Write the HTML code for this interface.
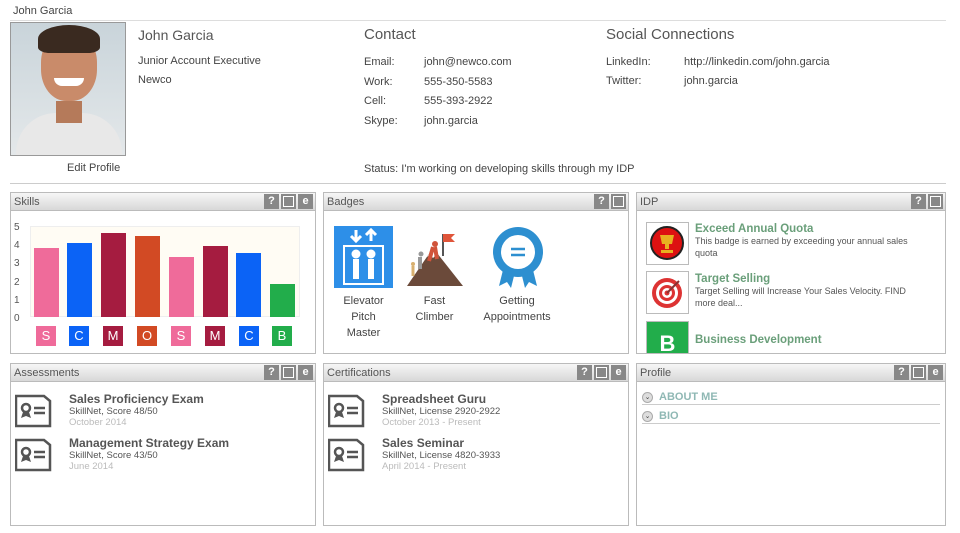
<!DOCTYPE html>
<html><head><meta charset="utf-8"><style>
*{box-sizing:border-box;margin:0;padding:0}
body{width:960px;height:533px;background:#fff;font-family:"Liberation Sans",sans-serif;color:#444;position:relative;overflow:hidden;font-size:11px}
.a{position:absolute}
.panel{position:absolute;border:1px solid #bbb;background:#fff}
.ph{height:18px;background:linear-gradient(#f6f6f6,#d8d8d8);border-bottom:1px solid #bbb;font-size:11px;line-height:18px;padding-left:3px;color:#555;position:relative}
.btns{position:absolute;right:2px;top:1px;display:flex;gap:2px}
.btns span{width:15px;height:15px;background:#888;color:#fff;font-weight:bold;font-size:11px;line-height:15px;text-align:center;display:block}
.btns span.w{position:relative}
.btns span.w:after{content:"";position:absolute;left:2px;top:2px;width:11px;height:11px;border:1px solid #fff;box-sizing:border-box;background:#888}
.bar{position:absolute;width:25px}
.lab{position:absolute;top:326px;width:20px;height:20px;color:#fff;font-size:13px;text-align:center;line-height:20px}
.it b{font-size:12px;color:#555;display:block}
.it div{font-size:9.5px;color:#555}
.it i{font-style:normal;font-size:9.5px;color:#bbb;display:block}
.idt{color:#6a9f7a;font-weight:bold;font-size:11.5px}
.idd{font-size:9px;color:#555;line-height:12px;width:225px}
.thumb{position:absolute;left:9px;width:43px;height:43px;border:1px solid #bbb;background:#fff}
</style></head><body>
<div class="a" style="left:13px;top:5px;font-size:11px;color:#444">John Garcia</div>
<div class="a" style="left:10px;top:20px;width:936px;border-top:1px solid #ddd"></div>
<div class="a" style="left:10px;top:22px;width:116px;height:134px;background:linear-gradient(#c9d4da,#e4e8ea);border:1px solid #999;overflow:hidden">
 <div class="a" style="left:30px;top:8px;width:56px;height:70px;border-radius:45%;background:#c98b6a"></div>
 <div class="a" style="left:27px;top:2px;width:62px;height:28px;border-radius:50% 50% 20% 20%;background:#3a2a20"></div>
 <div class="a" style="left:43px;top:55px;width:30px;height:8px;border-radius:0 0 10px 10px;background:#fff"></div>
 <div class="a" style="left:5px;top:90px;width:106px;height:50px;border-radius:40px 40px 0 0;background:#e8e8e8"></div>
 <div class="a" style="left:45px;top:78px;width:26px;height:22px;background:#b57a5a"></div>
</div>
<div class="a" style="left:67px;top:162px;font-size:11px">Edit Profile</div>
<div class="a" style="left:138px;top:27px;font-size:14px;color:#555">John Garcia</div>
<div class="a" style="left:138px;top:52px;font-size:11px;line-height:19px">Junior Account Executive<br>Newco</div>
<div class="a" style="left:364px;top:26px;font-size:15px;color:#555">Contact</div>
<div class="a" style="left:364px;top:53px;font-size:11px;line-height:19.7px">Email:<br>Work:<br>Cell:<br>Skype:</div>
<div class="a" style="left:424px;top:53px;font-size:11px;line-height:19.7px">john@newco.com<br>555-350-5583<br>555-393-2922<br>john.garcia</div>
<div class="a" style="left:606px;top:26px;font-size:15px;color:#555">Social Connections</div>
<div class="a" style="left:606px;top:53px;font-size:11px;line-height:19px">LinkedIn:<br>Twitter:</div>
<div class="a" style="left:684px;top:53px;font-size:11px;line-height:19px">http://linkedin.com/john.garcia<br>john.garcia</div>
<div class="a" style="left:364px;top:163px;font-size:11px">Status: I'm working on developing skills through my IDP</div>
<div class="a" style="left:10px;top:183px;width:936px;border-top:1px solid #ccc"></div>

<div class="panel" style="left:10px;top:192px;width:306px;height:162px"><div class="ph">Skills<div class="btns"><span>?</span><span class="w"></span><span>e</span></div></div></div>
<div class="a" style="left:30px;top:226px;width:270px;height:91px;background:#fffcf4;border:1px solid #eee"></div>
<div class="a" style="left:14px;top:219px;font-size:10px;line-height:18.2px;color:#555">5<br>4<br>3<br>2<br>1<br>0</div>
<div class="bar" style="left:34px;top:248px;height:69px;background:#ef6b9a"></div>
<div class="bar" style="left:67px;top:243px;height:74px;background:#0b63f6"></div>
<div class="bar" style="left:101px;top:233px;height:84px;background:#a51c40"></div>
<div class="bar" style="left:135px;top:236px;height:81px;background:#d24a24"></div>
<div class="bar" style="left:169px;top:257px;height:60px;background:#ef6b9a"></div>
<div class="bar" style="left:203px;top:246px;height:71px;background:#a51c40"></div>
<div class="bar" style="left:236px;top:253px;height:64px;background:#0b63f6"></div>
<div class="bar" style="left:270px;top:284px;height:33px;background:#22ad4b"></div>
<div class="lab" style="left:36px;background:#ef6b9a">S</div>
<div class="lab" style="left:69px;background:#0b63f6">C</div>
<div class="lab" style="left:103px;background:#a51c40">M</div>
<div class="lab" style="left:137px;background:#d24a24">O</div>
<div class="lab" style="left:171px;background:#ef6b9a">S</div>
<div class="lab" style="left:205px;background:#a51c40">M</div>
<div class="lab" style="left:239px;background:#0b63f6">C</div>
<div class="lab" style="left:272px;background:#22ad4b">B</div>

<div class="panel" style="left:323px;top:192px;width:306px;height:162px"><div class="ph">Badges<div class="btns"><span>?</span><span class="w"></span></div></div></div>
<div class="a" style="left:334px;top:226px;width:59px;height:62px;background:#2d8fe8">
<svg width="59" height="62" viewBox="0 0 59 62" fill="none" stroke="#fff" stroke-width="3"><path d="M22 4v10M17 10l5 5 5-5M37 15V5M32 9l5-5 5 5"/><rect x="10" y="20" width="39" height="38" stroke-width="2"/><circle cx="22" cy="28" r="3" fill="#fff"/><circle cx="37" cy="28" r="3" fill="#fff"/><path d="M22 33v20M37 33v20" stroke-width="6"/></svg></div>
<svg class="a" style="left:405px;top:230px" width="60" height="56" viewBox="0 0 60 56"><path d="M2 56L28 18 58 56Z" fill="#6b4a3a"/><path d="M22 27l6-9 6 9-3-2-3 3-3-3z" fill="#fff"/><path d="M38 4v22" stroke="#555" stroke-width="2"/><path d="M38 4h12l-4 4 4 4h-12z" fill="#e0553a"/><circle cx="30" cy="14" r="3" fill="#d0533a"/><path d="M28 17l-4 14M30 17l2 12" stroke="#d0533a" stroke-width="4"/><circle cx="16" cy="24" r="2.5" fill="#999"/><path d="M15 27v12" stroke="#999" stroke-width="4"/><circle cx="8" cy="34" r="2" fill="#d8b070"/><path d="M8 36v10" stroke="#d8b070" stroke-width="3"/></svg>
<svg class="a" style="left:491px;top:226px" width="54" height="64" viewBox="0 0 54 64"><path d="M14 36l-6 24 8-4 4 6 6-24zM40 36l6 24-8-4-4 6-6-24z" fill="#2d8fd0"/><circle cx="27" cy="26" r="25" fill="#2d8fd0"/><circle cx="27" cy="26" r="17" fill="#fff"/><path d="M20 23h14M20 29h14" stroke="#2d8fd0" stroke-width="2.5"/></svg>
<div class="a" style="left:334px;top:293px;width:59px;text-align:center;font-size:11px;line-height:16px">Elevator Pitch Master</div>
<div class="a" style="left:405px;top:293px;width:59px;text-align:center;font-size:11px;line-height:16px">Fast Climber</div>
<div class="a" style="left:472px;top:293px;width:90px;text-align:center;font-size:11px;line-height:16px">Getting Appointments</div>

<div class="panel" style="left:636px;top:192px;width:310px;height:162px;overflow:hidden"><div class="ph">IDP<div class="btns"><span>?</span><span class="w"></span></div></div>
 <div class="thumb" style="top:29px"><svg width="41" height="41"><circle cx="20" cy="20" r="16" fill="#d11" stroke="#222" stroke-width="2"/><path d="M13 12h14l-2 9h-10zM18 21h4v5h-4zM14 27h12v3H14z" fill="#e8b020"/></svg></div>
 <div class="a" style="left:58px;top:30px;width:248px"><div class="idt">Exceed Annual Quota</div><div class="idd">This badge is earned by exceeding your annual sales quota</div></div>
 <div class="thumb" style="top:78px"><svg width="41" height="41"><circle cx="20" cy="21" r="15" fill="#d33"/><circle cx="20" cy="21" r="11" fill="#fff"/><circle cx="20" cy="21" r="8" fill="#d33"/><circle cx="20" cy="21" r="5" fill="#fff"/><circle cx="20" cy="21" r="2.5" fill="#d33"/><path d="M20 21L32 9" stroke="#833" stroke-width="2"/></svg></div>
 <div class="a" style="left:58px;top:80px;width:248px"><div class="idt">Target Selling</div><div class="idd">Target Selling will Increase Your Sales Velocity. FIND more deal...</div></div>
 <div class="thumb" style="top:128px;background:#22ad4b;color:#fff;font-weight:bold;font-size:22px;text-align:center;line-height:44px">B</div>
 <div class="a idt" style="left:58px;top:141px">Business Development</div>
</div>

<div class="panel" style="left:10px;top:363px;width:306px;height:163px"><div class="ph">Assessments<div class="btns"><span>?</span><span class="w"></span><span>e</span></div></div></div>
<div class="panel" style="left:323px;top:363px;width:306px;height:163px"><div class="ph">Certifications<div class="btns"><span>?</span><span class="w"></span><span>e</span></div></div></div>
<svg width="0" height="0" style="position:absolute"><defs><g id="cert"><path d="M1 3h28l6 5v25H1z" fill="none" stroke="#555" stroke-width="2.5"/><circle cx="11" cy="15" r="4" fill="none" stroke="#555" stroke-width="2.5"/><path d="M8 19l-2 6 5-2 5 2-2-6" fill="#555"/><path d="M19 15h11M19 20h11" stroke="#555" stroke-width="2.5"/></g></defs></svg>
<svg class="a" style="left:15px;top:393px" width="38" height="36"><use href="#cert"/></svg>
<svg class="a" style="left:15px;top:437px" width="38" height="36"><use href="#cert"/></svg>
<svg class="a" style="left:328px;top:393px" width="38" height="36"><use href="#cert"/></svg>
<svg class="a" style="left:328px;top:437px" width="38" height="36"><use href="#cert"/></svg>
<div class="a it" style="left:69px;top:392px"><b>Sales Proficiency Exam</b><div>SkillNet, Score 48/50</div><i>October 2014</i></div>
<div class="a it" style="left:69px;top:436px"><b>Management Strategy Exam</b><div>SkillNet, Score 43/50</div><i>June 2014</i></div>
<div class="a it" style="left:382px;top:392px"><b>Spreadsheet Guru</b><div>SkillNet, License 2920-2922</div><i>October 2013 - Present</i></div>
<div class="a it" style="left:382px;top:436px"><b>Sales Seminar</b><div>SkillNet, License 4820-3933</div><i>April 2014 - Present</i></div>

<div class="panel" style="left:636px;top:363px;width:310px;height:163px"><div class="ph">Profile<div class="btns"><span>?</span><span class="w"></span><span>e</span></div></div>
 <div class="a" style="left:5px;top:28px;width:11px;height:11px;border-radius:50%;background:#ddd;border:1px solid #aaa;font-size:7px;line-height:9px;text-align:center">⌄</div>
 <div class="a" style="left:22px;top:27px;color:#8fb8b4;font-weight:bold;font-size:11px">ABOUT ME</div>
 <div class="a" style="left:5px;top:40px;width:298px;border-top:1px solid #ccc"></div>
 <div class="a" style="left:5px;top:47px;width:11px;height:11px;border-radius:50%;background:#ddd;border:1px solid #aaa;font-size:7px;line-height:9px;text-align:center">⌄</div>
 <div class="a" style="left:22px;top:46px;color:#8fb8b4;font-weight:bold;font-size:11px">BIO</div>
 <div class="a" style="left:5px;top:59px;width:298px;border-top:1px solid #ccc"></div>
</div>
</body></html>
